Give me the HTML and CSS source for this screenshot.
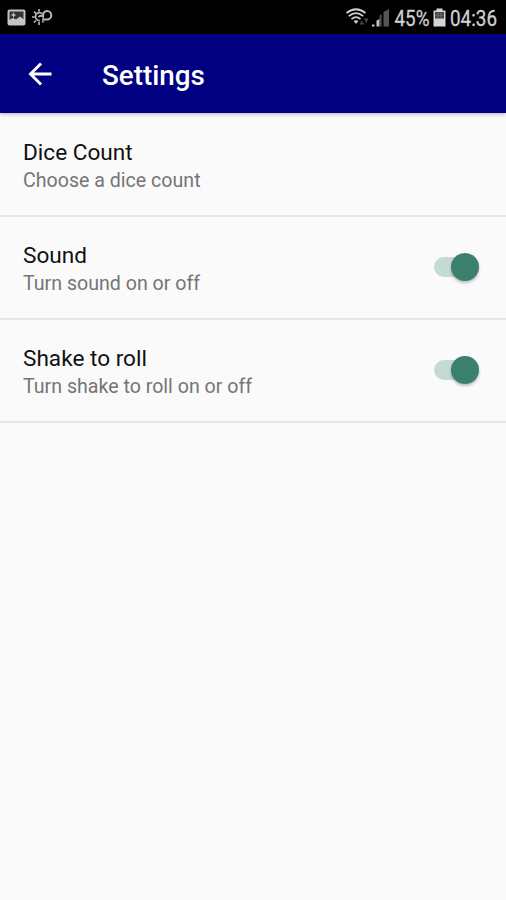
FILE: index.html
```html
<!DOCTYPE html>
<html lang="en">
<head>
    <meta charset="UTF-8">
    <meta name="viewport" content="width=device-width, initial-scale=1.0">
    <title>Settings</title>
    <link rel="stylesheet" href="styles.css">
</head>
<body>
    <div class="status-bar">
        <svg class="status-left" width="60" height="34" viewBox="0 0 60 34">
            <!-- Picture -->
            <rect x="8.5" y="10.500" width="16" height="14" rx="1" fill="#333" stroke="#c4c4c4" stroke-width="2"/>
            <path d="M9 24v-4l4-2 3 1.500 4-3 4 3v4.500z" fill="#c4c4c4"/>
            <path d="M13.500 12l.8 2.200 2.200.8-2.200.8-.8 2.200-.8-2.200-2.200-.8 2.200-.8z" fill="#c4c4c4"/>
            <!-- Weather -->
            <path d="M42.500 14a4 4 0 1 0-2.500 6.500M39 9v2.500M34 11.500l1.800 1.800M32 17h3M34 22.500l2-2M39 22v3M43.500 22.500l-1-1.500" fill="none" stroke="#b5b5b5" stroke-width="1.700"/>
            <path d="M38.500 17c1.500-2 3.500-1.500 4.500-.5 0-3.500 1.500-5.500 4-5.500a4.300 4.300 0 0 1 0 8.600h-5" fill="none" stroke="#b5b5b5" stroke-width="2"/>
        </svg>
        <svg class="status-right" width="170" height="34" viewBox="336 0 170 34">
            <!-- Wi-Fi -->
            <g fill="none" stroke="#d0d0d0" stroke-width="1.700">
                <path d="M346.500 13q9.500-7.500 19 0"/>
                <path d="M348.800 16.200q7.200-6 14.400 0"/>
                <path d="M351.500 19.200q4.500-4 9 0"/>
            </g>
            <path d="M353.500 21q2.500-1.500 5 0l-2.500 2.800z" fill="#d0d0d0"/>
            <path d="M359.500 24.500l2.300-4 2.300 4zM364 18.500h4.500l-2.200 4.500z" fill="#484848"/>
            <!-- Signal -->
            <path d="M372 24.500h2.500v2H372zM376.500 20.500l3-1.500v7.500h-3z" fill="#c4c4c4"/>
            <path d="M379.500 15.500l2-1.500v12.500h-2zM383.500 12l5.500-3v17.500h-5.500z" fill="#555"/>
            <text class="status-text" x="394.500" y="25.500" textLength="35" lengthAdjust="spacingAndGlyphs">45%</text>
            <!-- Battery -->
            <path d="M436.500 8.500h6v2h3v16h-12v-16h3z" fill="#d5d5d5"/>
            <path d="M435 12h9v6.500h-9z" fill="#444"/>
            <path d="M435 15.200h9M438 12v6.500M441 12v6.500" stroke="#777" stroke-width=".7"/>
            <text class="status-text" x="450" y="25.500" textLength="47" lengthAdjust="spacingAndGlyphs">04:36</text>
        </svg>
    </div>

    <header class="toolbar">
        <svg class="back-icon" width="24" height="24" viewBox="0 0 24 24">
            <path d="M23.500 12H2M13 1.500L2.500 12 13 22.500" fill="none" stroke="#fff" stroke-width="2.900"/>
        </svg>
        <h1>Settings</h1>
    </header>

    <main class="settings-list">
        <div class="setting">
            <div class="setting-text">
                <div class="setting-title">Dice Count</div>
                <div class="setting-summary">Choose a dice count</div>
            </div>
        </div>
        <div class="setting">
            <div class="setting-text">
                <div class="setting-title">Sound</div>
                <div class="setting-summary">Turn sound on or off</div>
            </div>
            <div class="switch"><div class="switch-thumb"></div></div>
        </div>
        <div class="setting">
            <div class="setting-text">
                <div class="setting-title">Shake to roll</div>
                <div class="setting-summary">Turn shake to roll on or off</div>
            </div>
            <div class="switch"><div class="switch-thumb"></div></div>
        </div>
    </main>
</body>
</html>
```
FILE: styles.css
```css
body {
    font-family: Roboto, sans-serif;
    margin: 0;
    min-height: 100vh;
    background-color: #fafafa;
}
.status-bar {
    display: flex;
    justify-content: space-between;
    height: 34px;
    background-color: #000;
}
.status-text {
    font-size: 22px;
    fill: #d0d0d0;
    stroke: #d0d0d0;
    stroke-width: 0.3px;
}
.toolbar {
    display: flex;
    align-items: center;
    box-sizing: border-box;
    height: 79px;
    padding-left: 28px;
    background-color: #000080;
    box-shadow: 0 1px 4px rgba(0, 0, 0, 0.3);
}
.back-icon {
    margin-top: 1px;
}
.toolbar h1 {
    margin: 4px 0 0 50px;
    color: #fff;
    font-size: 27.8px;
    font-weight: 500;
    line-height: 32px;
}
.settings-list {
    padding-top: 1px;
}
.setting {
    display: flex;
    align-items: center;
    justify-content: space-between;
    box-sizing: border-box;
    height: 103.1px;
    padding: 0 27px 0 23px;
    border-bottom: 2px solid #e6e6e6;
}
.setting-text {
    padding-top: 3px;
}
.setting-title {
    color: #111;
    font-size: 22.6px;
    line-height: 29px;
}
.setting-summary {
    color: #757575;
    font-size: 19.6px;
    line-height: 28px;
}
.switch {
    display: flex;
    align-items: center;
    justify-content: flex-end;
    width: 45px;
    height: 20px;
    margin-bottom: 2px;
    border-radius: 10px;
    background-color: #c6dad4;
}
.switch-thumb {
    width: 28px;
    height: 28px;
    flex-shrink: 0;
    border-radius: 50%;
    background-color: #3b7f6f;
    box-shadow: 0 2px 3px rgba(0, 0, 0, 0.25);
}
```
